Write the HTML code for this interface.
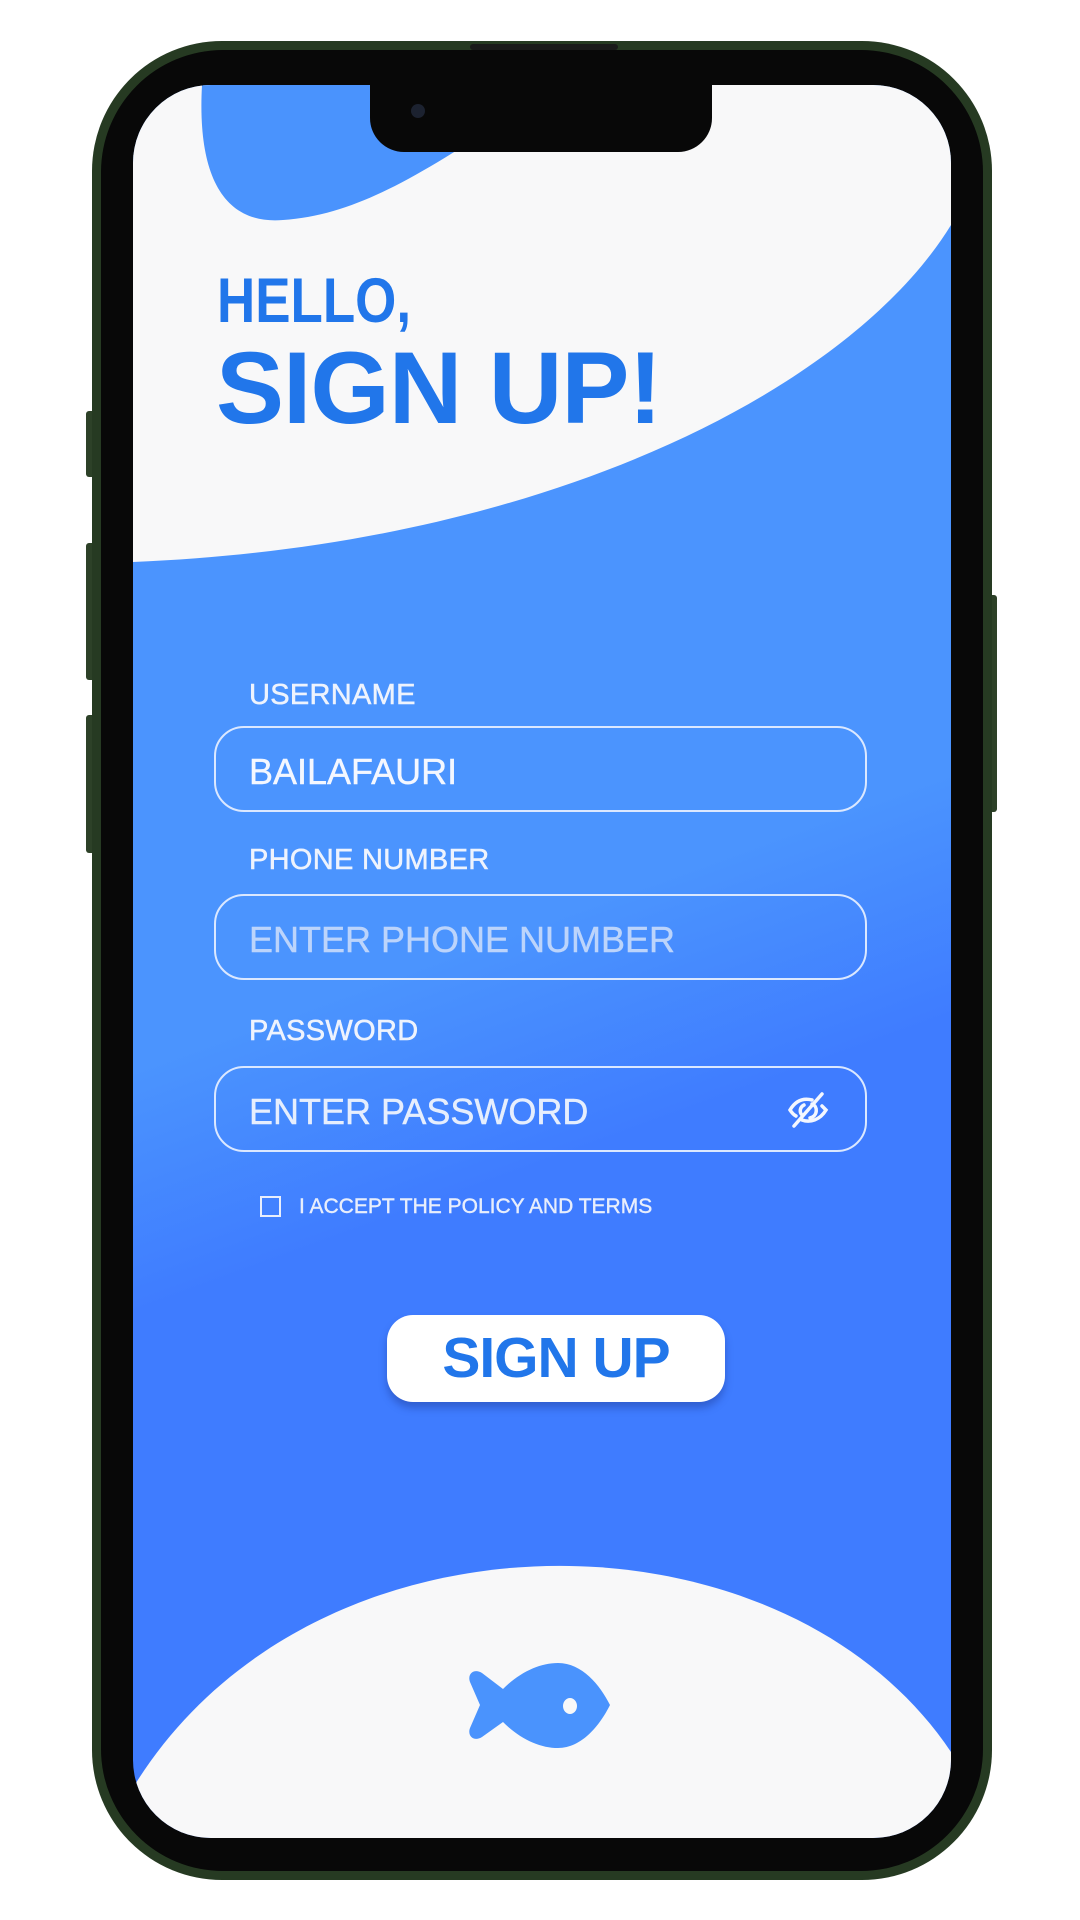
<!DOCTYPE html>
<html><head><meta charset="utf-8"><style>
html,body{margin:0;padding:0;background:#fff;width:1080px;height:1920px;overflow:hidden;font-family:"Liberation Sans",sans-serif}
.abs{position:absolute}
.phone{left:92px;top:41px;width:900px;height:1839px;border-radius:130px;background:#263a22;box-sizing:border-box}
.bezel{left:101px;top:50px;width:882px;height:1821px;border-radius:122px;background:#080808}
.screen{left:133px;top:85px;width:818px;height:1753px;border-radius:78px;overflow:hidden;background:linear-gradient(160deg,#4b94fe 0%,#4b94fe 48%,#3f7cff 60%,#3f7cff 100%)}
.btn{background:#2d4128;border-radius:3px}
.lbl{color:#eef3fd;font-size:29px;left:249px;letter-spacing:0.3px;-webkit-text-stroke:0.5px #eef3fd}
.inp{left:214px;width:653px;height:86px;border:2.5px solid #dbe8ff;border-radius:30px;box-sizing:border-box}
.val{left:249px;font-size:36px;color:#f4f7ff;-webkit-text-stroke:0.4px currentColor}
</style></head><body>
<div class="abs btn" style="left:86px;top:411px;width:10px;height:66px"></div>
<div class="abs btn" style="left:86px;top:543px;width:10px;height:137px"></div>
<div class="abs btn" style="left:86px;top:715px;width:10px;height:138px"></div>
<div class="abs btn" style="left:988px;top:595px;width:9px;height:217px"></div>
<div class="abs phone"></div>
<div class="abs bezel"></div>
<div class="abs screen">
<svg width="818" height="1753" style="position:absolute;left:0;top:0">
<path d="M0,0 H818 V140 C720,300 420,460 0,477 Z" fill="#f8f8f9"/>
<path d="M69,0 C64,90 90,140 150,135 C230,130 300,80 380,30 L400,0 Z" fill="#4a93fd"/>
<path d="M-10,1753 L-10,1720 C160,1410 650,1410 820,1670 L820,1753 Z" fill="#f8f8f9"/>
</svg>
</div>
<div class="abs" style="left:370px;top:80px;width:342px;height:72px;background:#080808;border-radius:0 0 34px 34px"></div>
<div class="abs" style="left:470px;top:44px;width:148px;height:6px;background:#1a1a1a;border-radius:3px"></div>
<div class="abs" style="left:411px;top:104px;width:14px;height:14px;border-radius:50%;background:#1c2230"></div>

<div class="abs" style="left:217px;top:270px;font-size:63px;font-weight:bold;color:#2176ea;line-height:63px;transform:scaleX(0.84);transform-origin:0 0">HELLO,</div>
<div class="abs" style="left:216px;top:337px;font-size:102px;font-weight:bold;color:#2176ea;line-height:102px;letter-spacing:-1px">SIGN UP!</div>

<div class="abs lbl" style="top:679px">USERNAME</div>
<div class="abs inp" style="top:726px"></div>
<div class="abs val" style="top:751px">BAILAFAURI</div>

<div class="abs lbl" style="top:844px">PHONE NUMBER</div>
<div class="abs inp" style="top:894px"></div>
<div class="abs val" style="top:919px;color:#bcd4fb">ENTER PHONE NUMBER</div>

<div class="abs lbl" style="top:1015px">PASSWORD</div>
<div class="abs inp" style="top:1066px"></div>
<div class="abs val" style="top:1091px;color:#e6eefd">ENTER PASSWORD</div>
<svg class="abs" style="left:782px;top:1090px" width="48" height="40" viewBox="0 0 48 40">
<path d="M8,20 C14,10 22,8 30,10 M40,16 C42,18 43,19 44,20 C38,30 28,33 20,30 M8,20 C10,23 12,25 14,26" fill="none" stroke="#f4f7ff" stroke-width="3.5" stroke-linecap="round"/>
<path d="M30,14 C36,16 36,26 28,28 M20,25 C17,22 18,17 22,15" fill="none" stroke="#f4f7ff" stroke-width="3.5" stroke-linecap="round"/>
<path d="M40,4 L12,36" stroke="#f4f7ff" stroke-width="3.5" stroke-linecap="round"/>
</svg>

<div class="abs" style="left:260px;top:1196px;width:21px;height:21px;border:2.5px solid #e8eefc;box-sizing:border-box"></div>
<div class="abs" style="left:299px;top:1196px;font-size:21px;color:#e8eefc;line-height:22px;-webkit-text-stroke:0.4px #e8eefc">I ACCEPT THE POLICY AND TERMS</div>

<div class="abs" style="left:387px;top:1315px;width:338px;height:87px;background:#fff;border-radius:26px;box-shadow:0 6px 8px rgba(20,40,120,0.35)"></div>
<div class="abs" style="left:387px;top:1315px;width:338px;height:87px;line-height:87px;text-align:center;font-size:57px;font-weight:bold;color:#2176ea;letter-spacing:-1px">SIGN UP</div>

<svg class="abs" style="left:0;top:0" width="1080" height="1920">
<path d="M503,1689 C520,1672 540,1663 558,1663 C582,1663 600,1685 610,1705 C600,1725 582,1748 558,1748 C540,1748 520,1739 503,1722 L482,1737 C474,1742 467,1736 470,1728 L480,1705 L470,1682 C467,1674 474,1668 482,1673 Z" fill="#4a93fd"/>
<ellipse cx="570" cy="1706" rx="7" ry="8" fill="#f8f8f9"/>
</svg>
</body></html>
